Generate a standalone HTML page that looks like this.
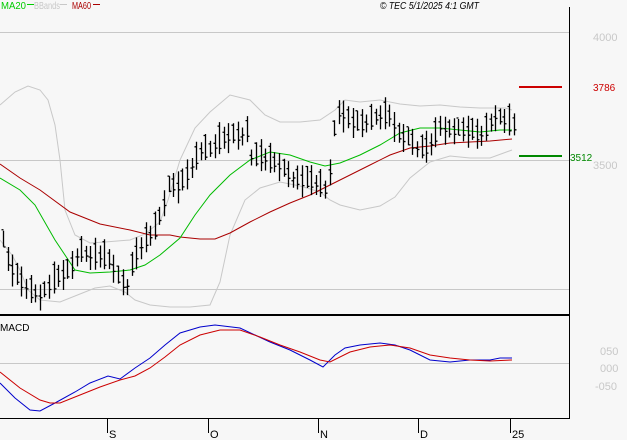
<!DOCTYPE html>
<html><head><meta charset="utf-8"><style>
body{margin:0;background:#f7f7f7;width:627px;height:440px;overflow:hidden;font-family:"Liberation Sans",sans-serif}
svg{display:block}
text{font-family:"Liberation Sans",sans-serif}
</style></head><body>
<svg id="s" width="627" height="440" viewBox="0 0 627 440" xmlns="http://www.w3.org/2000/svg">
<rect width="627" height="440" fill="#f7f7f7"/>
<text x="1" y="9" font-size="10" fill="#00cc00" textLength="25" lengthAdjust="spacingAndGlyphs">MA20</text><line x1="27" y1="4.5" x2="34" y2="4.5" stroke="#00cc00"/>
<text x="34" y="9" font-size="10" fill="#c8c8c8" textLength="26" lengthAdjust="spacingAndGlyphs">BBands</text><line x1="60" y1="4.5" x2="67" y2="4.5" stroke="#c8c8c8"/>
<text x="72" y="9" font-size="10" fill="#aa0000" textLength="19" lengthAdjust="spacingAndGlyphs">MA60</text><line x1="93" y1="4.5" x2="100" y2="4.5" stroke="#aa0000"/>
<text x="380" y="9" font-size="10" font-style="italic" fill="#000" textLength="99" lengthAdjust="spacingAndGlyphs">© TEC 5/1/2025 4:1 GMT</text>
<line x1="0" y1="32.5" x2="569" y2="32.5" stroke="#c8c8c8"/>
<line x1="0" y1="160.5" x2="569" y2="160.5" stroke="#c8c8c8"/>
<line x1="0" y1="289.5" x2="569" y2="289.5" stroke="#c8c8c8"/>
<line x1="0" y1="363.5" x2="569" y2="363.5" stroke="#c8c8c8"/>
<line x1="569.5" y1="7" x2="569.5" y2="419" stroke="#000"/>
<line x1="0" y1="315" x2="570" y2="315" stroke="#000" stroke-width="2"/>
<line x1="0" y1="418.5" x2="570" y2="418.5" stroke="#000"/>
<g stroke="#000"><line x1="107.5" y1="419" x2="107.5" y2="433"/><line x1="208.5" y1="419" x2="208.5" y2="433"/><line x1="318.5" y1="419" x2="318.5" y2="433"/><line x1="418.5" y1="419" x2="418.5" y2="433"/><line x1="510.5" y1="419" x2="510.5" y2="433"/></g>
<g font-size="11" fill="#000"><text x="109" y="438">S</text><text x="210" y="438">O</text><text x="320" y="438">N</text><text x="420" y="438">D</text><text x="512" y="438">25</text></g>
<g font-size="11" fill="#c8c8c8"><text x="593" y="41">4000</text><text x="593" y="169">3500</text><text x="600" y="355">050</text><text x="600" y="372">000</text><text x="595" y="390">-050</text></g>
<text x="0" y="331" font-size="10" fill="#000">MACD</text>
<line x1="519" y1="87" x2="562" y2="87" stroke="#cc0000" stroke-width="2"/>
<text x="593" y="91" font-size="10" fill="#cc0000">3786</text>
<line x1="519" y1="156" x2="562" y2="156" stroke="#008800" stroke-width="2"/>
<text x="570" y="161" font-size="10" fill="#008800">3512</text>
<polyline fill="none" stroke="#c8c8c8" points="0,105 15,92 28,86 40,90 48,100 55,125 60,160 65,210 75,235 90,243 105,242 130,240 145,234 160,222 168,200 180,160 195,128 210,112 230,95 250,100 265,115 280,122 300,122 320,120 335,110 345,100 360,102 380,100 400,104 420,106 440,105 460,107 480,108 505,108 512,110"/>
<polyline fill="none" stroke="#c8c8c8" points="0,240 12,255 20,270 28,290 40,300 60,302 80,294 95,288 110,286 125,292 135,300 150,305 170,307 190,307 210,305 220,282 230,235 245,200 260,188 280,182 300,186 320,192 330,200 340,205 360,210 380,206 395,197 410,178 430,162 450,156 470,158 490,158 512,150"/>
<polyline fill="none" stroke="#aa0000" points="0,164 20,178 40,190 70,212 100,224 130,230 150,235 170,235 180,237 200,239 215,239 230,233 250,222 270,212 290,203 310,195 330,185 350,175 370,165 390,155 410,148 430,146 450,143 470,142 490,141 512,139"/>
<polyline fill="none" stroke="#00bb00" points="0,178 20,190 35,205 55,240 75,270 90,273 110,272 130,270 145,265 160,255 180,238 195,215 210,195 230,175 250,160 270,152 290,155 310,162 325,166 340,163 360,155 380,145 400,133 420,128 440,128 460,130 480,132 500,130 512,130"/>
<polyline fill="none" stroke="#0000cc" points="0,383 15,398 30,410 40,411 55,403 75,392 90,383 108,376 120,379 135,368 150,358 165,345 180,333 200,327 215,325 240,328 255,335 270,342 290,350 310,360 323,367 335,355 345,348 360,345 380,343 395,345 410,350 430,360 450,362 470,360 490,360 500,358 512,358"/>
<polyline fill="none" stroke="#cc0000" points="0,372 20,388 40,400 50,403 60,403 80,395 100,387 120,380 135,376 150,368 165,357 180,345 200,335 220,330 240,330 260,337 280,345 300,352 320,360 330,362 350,352 370,347 390,345 410,348 430,355 450,358 470,360 490,361 512,360"/>
<g id="bars" stroke="#000" fill="none"></g>
</svg>
<script>
var P=[[3,240],[10,265],[20,280],[30,290],[40,295],[50,285],[60,275],[70,270],[80,250],[90,255],[100,255],[110,260],[120,280],[128,285],[135,255],[145,240],[155,230],[160,215],[170,185],[180,185],[190,170],[200,150],[210,150],[220,140],[230,135],[240,135],[248,130],[252,160],[260,155],[270,160],[280,165],[290,175],[300,180],[310,180],[320,185],[326,190],[330,175],[335,125],[340,110],[350,120],[360,125],[370,120],[380,115],[390,115],[400,135],[410,140],[420,150],[430,145],[440,125],[450,130],[460,130],[470,130],[480,135],[490,125],[495,115],[505,120],[514,125]];
function f(x){for(var i=0;i<P.length-1;i++){if(x<=P[i+1][0]){var t=(x-P[i][0])/(P[i+1][0]-P[i][0]);return P[i][1]+t*(P[i+1][1]-P[i][1]);}}return P[P.length-1][1];}
var g=document.getElementById('bars'),d='';
for(var k=0;k<112;k++){var x=Math.round(3+k*4.6)+0.5;if(x>515)break;var m=f(x);var n=((k*37)%11)-5;var h=8+((k*13)%9);var c=m+n*0.6;
d+='M'+x+' '+(c-h)+'V'+(c+h)+'M'+(x-2)+' '+(c-h*0.5+n)+'H'+x+'M'+x+' '+(c+h*0.4-n)+'H'+(x+2);}
var p=document.createElementNS('http://www.w3.org/2000/svg','path');p.setAttribute('d',d);p.setAttribute('stroke-width','1.3');g.appendChild(p);
</script>
</body></html>
